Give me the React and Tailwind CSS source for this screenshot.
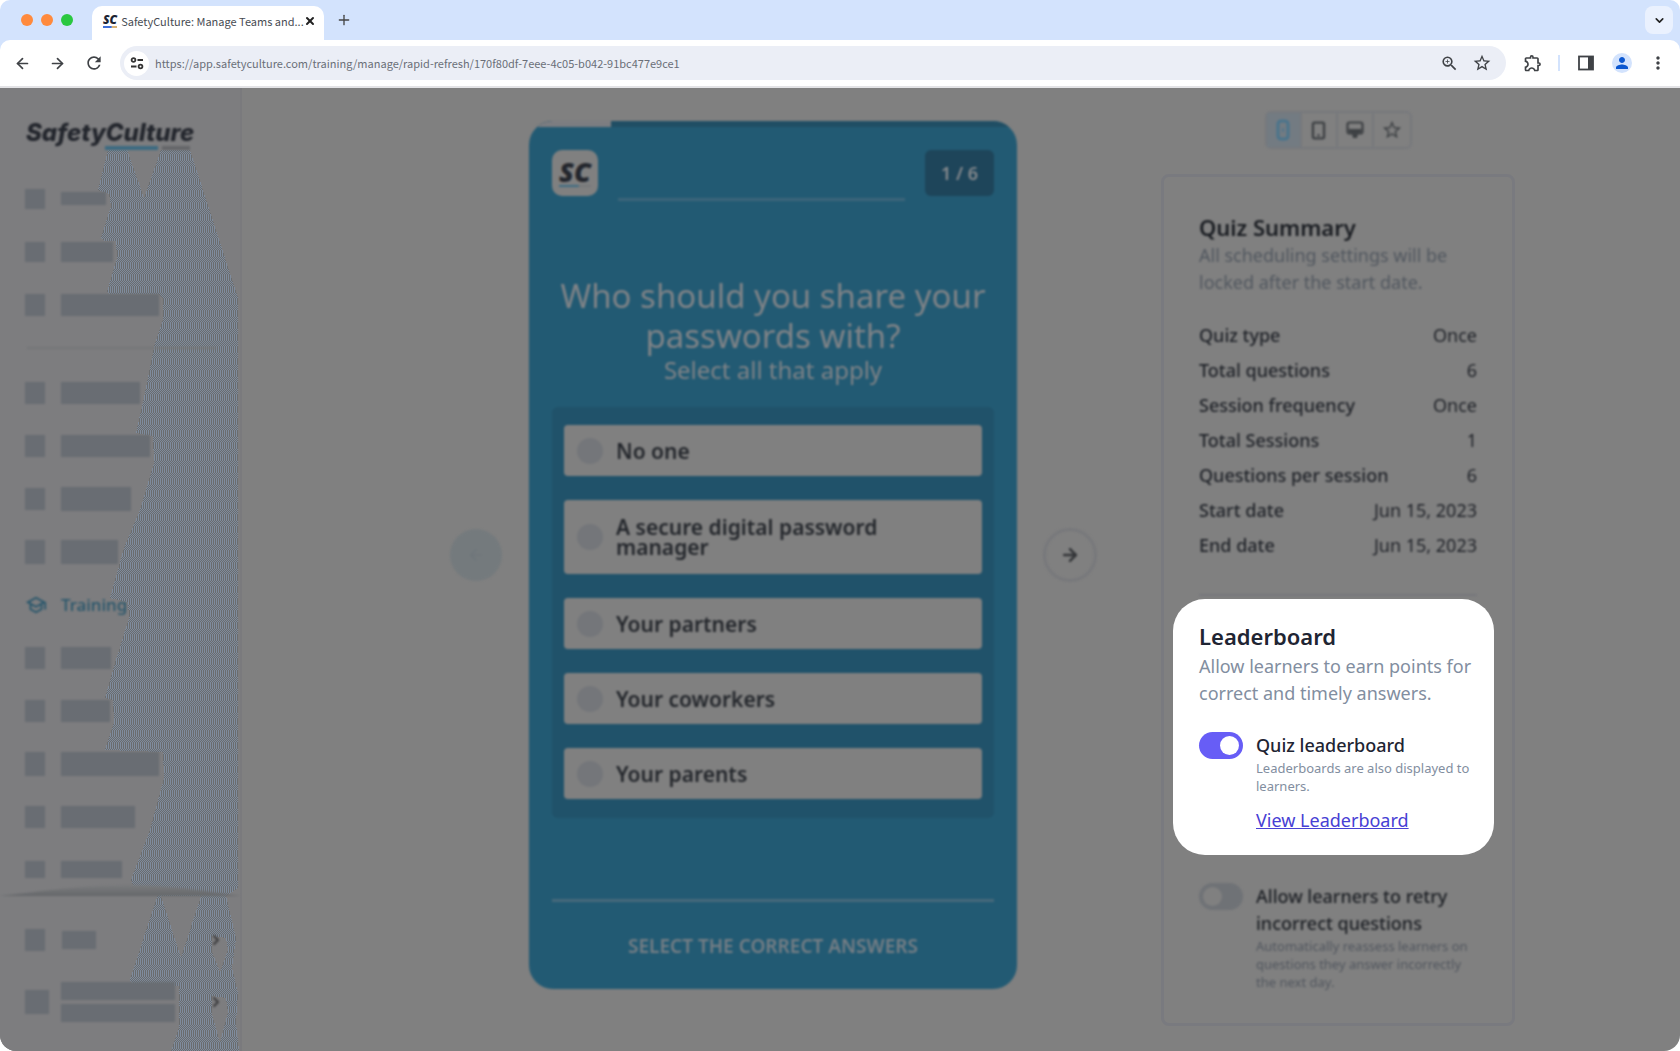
import React, { useState } from 'react';
import {
  ArrowLeft,
  ArrowRight,
  ChevronDown,
  ChevronRight,
  Plus,
  Smartphone,
  X
} from 'lucide-react';
import {
  MdMoreVert,
  MdOutlineExtension,
  MdOutlineSchool,
  MdPerson,
  MdRefresh,
  MdStarOutline,
  MdZoomIn
} from 'react-icons/md';

const mainNav = [
  { icon: 'h-5', bar: 'w-[45px] h-[13px]' },
  { icon: 'h-5', bar: 'w-[52px] h-5' },
  { icon: 'h-[22px]', bar: 'w-[98px] h-[22px]' }
];

const toolNav = [
  { icon: 'h-[22px]', bar: 'w-[79px] h-[22px]' },
  { icon: 'h-[22px]', bar: 'w-[89px] h-[22px]' },
  { icon: 'h-[22px]', bar: 'w-[70px] h-6' },
  { icon: 'h-6', bar: 'w-[57px] h-6' },
  { label: 'Training' },
  { icon: 'h-[22px]', bar: 'w-[50px] h-[22px]' },
  { icon: 'h-[22px]', bar: 'w-[49px] h-[22px]' },
  { icon: 'h-6', bar: 'w-[98px] h-6' },
  { icon: 'h-[22px]', bar: 'w-[74px] h-[22px]' },
  { icon: 'h-[17px]', bar: 'w-[61px] h-[17px]' }
];

const answers = [
  'No one',
  'A secure digital password manager',
  'Your partners',
  'Your coworkers',
  'Your parents'
];

const summary = [
  ['Quiz type', 'Once'],
  ['Total questions', '6'],
  ['Session frequency', 'Once'],
  ['Total Sessions', '1'],
  ['Questions per session', '6'],
  ['Start date', 'Jun 15, 2023'],
  ['End date', 'Jun 15, 2023']
];

function BrowserBar() {
  return (
    <header className="bg-[#d3e3fd] rounded-t-[10px] font-['Noto_Sans_CJK_SC','Noto_Sans',sans-serif]">
      <div className="flex items-end h-10 pl-[21px] pr-[7px]">
        <div className="flex gap-2 h-10 items-center mr-[19px]">
          <span className="size-3 rounded-full bg-[#ff8a3d]" />
          <span className="size-3 rounded-full bg-[#ff8a3d]" />
          <span className="size-3 rounded-full bg-[#2ac840]" />
        </div>
        <div className="flex items-center h-[34px] w-[232px] bg-white rounded-t-[10px] pl-[11px] pr-[9px] pb-1">
          <SmallLogo className="text-[12px] leading-[12px] text-[#1d2433]" line="#3f6fd8" tail="#d9b274" />
          <span className="flex-1 ml-1 text-[11px] leading-4 text-[#474b52] whitespace-nowrap">SafetyCulture: Manage Teams and...</span>
          <button type="button" aria-label="Close tab" className="text-[#222]">
            <X size={12} strokeWidth={4} />
          </button>
        </div>
        <button type="button" aria-label="New tab" className="flex items-center h-10 ml-3 text-[#444]">
          <Plus size={16} strokeWidth={2} />
        </button>
        <button type="button" aria-label="Search tabs" className="flex items-center justify-center size-7 mb-[6px] ml-auto rounded-lg bg-[#eaf1fe] text-[#222]">
          <ChevronDown size={13} strokeWidth={3} />
        </button>
      </div>
      <div className="flex items-center h-12 bg-white rounded-t-[10px] border-b-2 border-[#e3e3e6] pl-[14px] pr-[12px] text-[#3f4246]">
        <button type="button" aria-label="Back"><ArrowLeft size={17} strokeWidth={2.4} /></button>
        <button type="button" aria-label="Forward" className="ml-[18px]"><ArrowRight size={17} strokeWidth={2.4} /></button>
        <button type="button" aria-label="Reload" className="ml-[18px]"><MdRefresh size={20} /></button>
        <div className="flex items-center flex-1 h-[34px] ml-4 pl-1 pr-[14px] rounded-full bg-[#ebeef6]">
          <span className="flex items-center justify-center size-[25px] rounded-full bg-white">
            <svg width="14" height="14" viewBox="0 0 14 14" fill="none" stroke="#333" strokeWidth="1.8">
              <circle cx="3.5" cy="4" r="1.9" />
              <path d="M7.5 4H13M1 10.5H6.5" />
              <circle cx="10.5" cy="10.5" r="1.9" />
            </svg>
          </span>
          <input
            type="text"
            aria-label="Address"
            readOnly
            value="https://app.safetyculture.com/training/manage/rapid-refresh/170f80df-7eee-4c05-b042-91bc477e9ce1"
            className="flex-1 ml-[6px] text-[11px] leading-4 text-[#6a6e78] bg-transparent outline-none"
          />
          <button type="button" aria-label="Zoom"><MdZoomIn size={19} /></button>
          <button type="button" aria-label="Bookmark" className="ml-[13px]"><MdStarOutline size={20} /></button>
        </div>
        <button type="button" aria-label="Extensions" className="ml-[17px]"><MdOutlineExtension size={20} /></button>
        <span className="w-[2px] h-4 ml-[15px] bg-[#d3e3fd]" />
        <button type="button" aria-label="Side panel" className="ml-[18px]">
          <svg width="16" height="16" viewBox="0 0 16 16">
            <rect x="1" y="1.5" width="14" height="13" fill="none" stroke="#3f4246" strokeWidth="1.8" />
            <path d="M10 1.5h5v13h-5z" fill="#3f4246" />
          </svg>
        </button>
        <button type="button" aria-label="Profile" className="flex items-center justify-center size-5 ml-[18px] rounded-full bg-[#d3e3fd] text-[#0b57d0]">
          <MdPerson size={18} />
        </button>
        <button type="button" aria-label="Menu" className="ml-[16px]"><MdMoreVert size={20} /></button>
      </div>
    </header>
  );
}

function SmallLogo({ className, line, tail }) {
  return (
    <span className={`${className} inline-block font-['Open_Sans',sans-serif] font-extrabold italic`}>
      SC
      <svg viewBox="0 0 16 2" className="block w-full h-[2px]" preserveAspectRatio="none">
        <path d="M0 0h10v2H0z" fill={line} />
        <path d="M10 0h6v2h-6z" fill={tail} />
      </svg>
    </span>
  );
}

// woven texture that falls behind the navigation
function SidebarTexture() {
  return (
    <svg className="absolute inset-0 pointer-events-none" width="240" height="963" viewBox="0 0 240 963" shapeRendering="crispEdges">
      <defs>
        <pattern id="weave" width="2" height="12" patternUnits="userSpaceOnUse">
          <rect width="2" height="12" fill="#6a6c6e" />
          <path d="M0 0h1v1H0zM1 1h1v1H1zM0 2h1v1H0zM1 3h1v1H1zM0 4h1v1H0zM1 5h1v1H1zM0 6h1v6H0z" fill="#7f8c9d" />
        </pattern>
      </defs>
      <path
        fill="url(#weave)"
        fillRule="evenodd"
        d="M108 62L98 102L109 106L111 118L101 150L104 153H116L117 170L107 204L110 206H158L163 210V232L155 255L145 305L136 345L153 348L154 375L140 422L124 460L110 510L128 514L129 530L115 575L105 610L113 612L114 635L105 662L163 664L164 690L150 742L131 792L134 800L158 806L130 892L134 898H179V940L171 963H239L236 935L238 905L232 880L236 850L226 808L238 800V210L190 62H161L144 110L127 62ZM161 808L181 870L201 808ZM212 848L226 850L228 862L220 884L212 864ZM212 908L226 910L228 924L220 955L212 926Z"
      />
    </svg>
  );
}

function NavItem({ item }) {
  if (item.label) {
    return (
      <a href="#training" className="flex items-center h-[53px] pl-[25px] text-[#28566b]">
        <MdOutlineSchool size={22} />
        <span className="ml-[14px] text-[17px] leading-6 font-medium">{item.label}</span>
      </a>
    );
  }
  return (
    <div className="flex items-center h-[53px] pl-[25px]">
      <span className={`${item.icon} w-5 bg-[#696d73]`} />
      <span className={`${item.bar} ml-4 bg-[#696d73]`} />
    </div>
  );
}

function Sidebar() {
  return (
    <aside className="relative w-[242px] shrink-0 bg-[#7d7d7f] border-r-2 border-[#7a7a7d]">
      <SidebarTexture />
      <div className="relative blur-[1px]">
        <div className="h-[84px] pl-[26px] pt-[32px]">
          <div className="text-[24px] leading-[26px] font-['Inter',sans-serif] font-extrabold italic text-[#23262d]">SafetyCulture</div>
          <div className="flex gap-1 pl-[79px]">
            <span className="w-[53px] h-1 bg-[#3d6b82]" />
            <span className="w-[28px] h-1 bg-[#66676a]" />
          </div>
        </div>
        <nav>
          {mainNav.map((item, i) => <NavItem key={i} item={item} />)}
          <hr className="mt-4 mb-[17px] ml-[27px] mr-6 border-t-2 border-[#747678]" />
          {toolNav.map((item, i) => <NavItem key={i} item={item} />)}
        </nav>
        <svg className="block -mt-3" width="240" height="12" viewBox="0 0 240 12">
          <defs>
            <linearGradient id="shade" x1="0" y1="0" x2="0" y2="1">
              <stop offset="0" stopColor="#7a7b7d" />
              <stop offset="1" stopColor="#66686b" />
            </linearGradient>
          </defs>
          <path d="M0 12C60 5 90 1 130 1C180 2 210 8 240 12Z" fill="url(#shade)" />
        </svg>
        <div className="flex items-center h-[62px] mt-[13px] pl-[25px] pr-4">
          <span className="w-5 h-[22px] bg-[#696d73]" />
          <span className="w-[34px] h-[18px] ml-[17px] bg-[#696d73]" />
          <ChevronRight size={16} strokeWidth={3} className="ml-auto text-[#3a3a3c]" />
        </div>
        <div className="flex items-center h-[62px] pl-[25px] pr-4">
          <span className="size-6 bg-[#696d73]" />
          <div className="flex flex-col gap-1 ml-3">
            <span className="w-[114px] h-[18px] bg-[#696d73]" />
            <span className="w-[114px] h-[18px] bg-[#696d73]" />
          </div>
          <ChevronRight size={16} strokeWidth={3} className="ml-auto text-[#3a3a3c]" />
        </div>
      </div>
    </aside>
  );
}

function QuizPreview() {
  return (
    <section className="flex flex-col w-[488px] h-[868px] shrink-0 overflow-hidden rounded-[24px] bg-[#225a73] blur-[1px]">
      <div className="flex h-[6px] bg-[#204e64]">
        <div className="w-[82px] bg-[#7c7d81]" />
      </div>
      <div className="flex pt-[23px] px-[23px]">
        <span className="flex items-center justify-center size-[46px] rounded-[10px] bg-[#808080]">
          <SmallLogo className="text-[27px] leading-[26px] text-[#23262d]" line="#3d6b82" tail="#75777a" />
        </span>
        <div className="flex-1 mx-[20px] h-[51px] border-b-[3px] border-[#3c657a]" />
        <span className="flex items-center justify-center w-[69px] h-[46px] rounded-md bg-[#1e455a] text-[18px] leading-6 font-semibold text-[#85898d]">1 / 6</span>
      </div>
      <div className="mt-[75px] text-center text-[#7f8387]">
        <h1 className="text-[33px] leading-10 px-5">Who should you share your passwords with?</h1>
        <p className="text-[24px] leading-[28px]">Select all that apply</p>
      </div>
      <div className="flex flex-col gap-6 mt-[23px] mx-[23px] px-3 pt-[18px] pb-[19px] rounded-md bg-[#20526a]">
        {answers.map((answer) => (
          <label key={answer} className={`flex items-center ${answer.length > 20 ? 'h-[74px]' : 'h-[51px]'} pl-[13px] pr-10 rounded-[4px] bg-[#808080] text-[21px] leading-5 font-semibold text-[#24272c]`}>
            <input type="checkbox" className="appearance-none size-[26px] mr-[13px] shrink-0 rounded-full bg-[#74767a]" />
            {answer}
          </label>
        ))}
      </div>
      <div className="mt-auto mx-[23px] h-[90px] border-t-[3px] border-[#46697b] pt-[32px] text-center text-[19px] leading-6 font-semibold text-[#757e85]">
        SELECT THE CORRECT ANSWERS
      </div>
    </section>
  );
}

function Toggle({ id, checked, onChange, className }) {
  return (
    <input
      id={id}
      type="checkbox"
      checked={checked}
      onChange={(e) => onChange(e.target.checked)}
      className={`${className} appearance-none w-11 h-[27px] shrink-0 rounded-full p-1 before:block before:size-[19px] before:rounded-full checked:before:ml-[17px]`}
    />
  );
}

function DeviceTabs() {
  const cell = 'flex items-center justify-center w-[36px] h-[34px] first:w-[35px]';
  return (
    <div className="flex divide-x-2 divide-[#76787c] rounded-md border-2 border-[#76787c] text-[#3e4144] blur-[1px]">
      <button type="button" aria-label="Phone" className={`${cell} bg-[#737b82] text-[#4a748c]`}>
        <svg width="14" height="22" viewBox="0 0 14 22" fill="none" stroke="currentColor">
          <rect x="2" y="2" width="10" height="18" rx="3" strokeWidth="3" />
          <path d="M7 9v4" strokeWidth="1.5" />
        </svg>
      </button>
      <button type="button" aria-label="Tablet" className={cell}><Smartphone size={19} strokeWidth={3} /></button>
      <button type="button" aria-label="Desktop" className={cell}>
        <svg width="18" height="18" viewBox="0 0 18 18">
          <rect x="1.5" y="1.5" width="15" height="11" rx="2" fill="none" stroke="currentColor" strokeWidth="2.2" />
          <path d="M2 8h14l-2 5h-2l-1 4H7l-1-4H4z" fill="currentColor" />
        </svg>
      </button>
      <button type="button" aria-label="Favourite" className={cell}><MdStarOutline size={22} /></button>
    </div>
  );
}

function SettingsPanel() {
  const [leaderboard, setLeaderboard] = useState(true);
  const [retry, setRetry] = useState(false);

  return (
    <div className="flex flex-col items-center w-[354px] shrink-0 ml-16 pt-[23px]">
      <DeviceTabs />
      <div className="w-full mt-[25px] px-[35px] pt-[35px] pb-8 rounded-lg border-[3px] border-[#797a7f]">
        <div className="blur-[1px]">
          <h2 className="text-[22px] leading-[30px] font-semibold text-[#1a1d22]">Quiz Summary</h2>
          <p className="text-[18px] leading-[27px] text-[#51575f]">All scheduling settings will be locked after the start date.</p>
          <dl className="mt-[22px] text-[18px] text-[#1f2228]">
            {summary.map(([name, value]) => (
              <div key={name} className="flex items-center justify-between h-[35px]">
                <dt className="font-medium">{name}</dt>
                <dd>{value}</dd>
              </div>
            ))}
          </dl>
          <hr className="mt-[31px] border-t-2 border-[#76777b]" />
        </div>

        <div className="mt-[3px] -ml-[26px] -mr-[17px] pl-[26px] pr-4 pt-[22px] pb-[21px] rounded-[32px] bg-white">
          <h2 className="mb-0.5 text-[22px] leading-[30px] font-semibold text-[#1f2533]">Leaderboard</h2>
          <p className="text-[18px] leading-[27px] text-[#828ea0]">Allow learners to earn points for correct and timely answers.</p>
          <div className="flex mt-[25px]">
            <Toggle id="leaderboard" checked={leaderboard} onChange={setLeaderboard} className="bg-[#675df6] before:bg-white" />
            <div className="ml-[13px]">
              <label htmlFor="leaderboard" className="block text-[18px] leading-[27px] font-medium text-[#1f2533]">Quiz leaderboard</label>
              <p className="text-[13px] leading-[18px] text-[#828ea0]">Leaderboards are also displayed to learners.</p>
              <a href="#leaderboard" className="block mt-3 text-[18px] leading-[27px] text-[#4740d4] underline">View Leaderboard</a>
            </div>
          </div>
        </div>

        <div className="flex pt-7 blur-[1px]">
          <Toggle id="retry" checked={retry} onChange={setRetry} className="bg-[#6f7276] before:bg-[#808080]" />
          <div className="ml-[13px]">
            <label htmlFor="retry" className="block text-[18px] leading-[27px] font-medium text-[#1c1f24]">Allow learners to retry incorrect questions</label>
            <p className="text-[13px] leading-[18px] text-[#51565e]">Automatically reassess learners on questions they answer incorrectly the next day.</p>
          </div>
        </div>
      </div>
    </div>
  );
}

export default function App() {
  return (
    <div className="flex flex-col min-h-screen bg-white">
      <BrowserBar />
      <div className="flex flex-1 overflow-hidden rounded-b-[16px] bg-[#808080] font-['Noto_Sans',sans-serif]">
        <Sidebar />
        <main className="flex flex-1 justify-center pl-[43px]">
          <div className="flex items-center h-[868px] mt-[33px]">
            <button type="button" aria-label="Previous question" className="flex items-center justify-center size-[52px] mr-[27px] shrink-0 rounded-full bg-[#747a7d] text-[#6f767b] blur-[1px]">
              <ArrowLeft size={18} />
            </button>
            <QuizPreview />
            <button type="button" aria-label="Next question" className="flex items-center justify-center size-[54px] ml-[26px] shrink-0 rounded-full border-[3px] border-[#77787b] text-[#333538] blur-[1px]">
              <ArrowRight size={20} strokeWidth={3} />
            </button>
          </div>
          <SettingsPanel />
        </main>
      </div>
    </div>
  );
}
